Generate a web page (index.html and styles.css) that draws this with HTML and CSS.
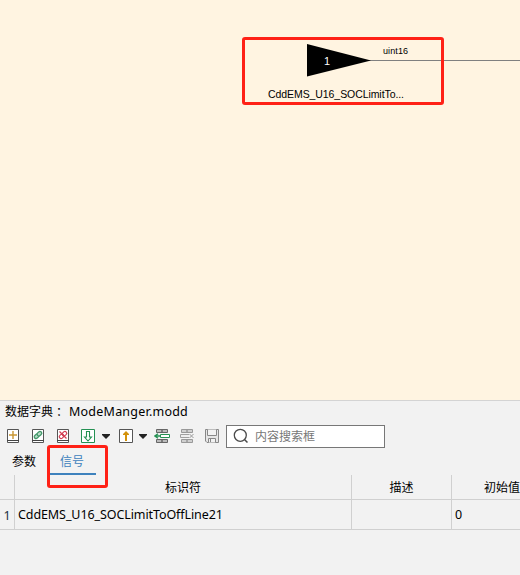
FILE: index.html
```html
<!DOCTYPE html>
<html lang="zh-CN">
<head>
<meta charset="utf-8">
<title>ModeManger.modd</title>
<link rel="stylesheet" href="styles.css">
</head>
<body>
<main class="app">
  <section class="canvas">
    <svg class="diagram" width="520" height="400" viewBox="0 0 520 400">
      <path d="M369 60.500H520" stroke="#808080"/>
      <path d="M307 44L371 60.500L307 76.500Z" fill="#000"/>
      <text class="port" x="324" y="65">1</text>
      <text class="type" x="383" y="54" textLength="25">uint16</text>
      <text class="name" x="268" y="98" textLength="136">CddEMS_U16_SOCLimitTo...</text>
    </svg>
    <div class="mark mark-port"></div>
  </section>
  <section class="panel">
    <header class="title"><span class="title-label">数据字典</span><span class="colon">：</span><span class="file">ModeManger.modd</span></header>
    <div class="toolbar">
      <svg class="book" width="14" height="16" viewBox="0 0 14 16"><path d="M1.500 1.500H12.500V14.500H1.500Z" fill="#fff" stroke="#555"/><path d="M1 12.500H13" stroke="#444"/><path d="M7 3V11M3 7H11" stroke="#c99732" stroke-width="1.400"/></svg>
      <svg class="book" width="14" height="16" viewBox="0 0 14 16"><path d="M1.500 1.500H12.500V14.500H1.500Z" fill="#fff" stroke="#555"/><path d="M1 12.500H13" stroke="#444"/><g transform="rotate(-42 7 7)" fill="#b9dcc8" stroke="#43986a" stroke-width="1.300"><rect x="2.600" y="5.200" width="5" height="3.600" rx="1.800"/><rect x="6.400" y="5.200" width="5" height="3.600" rx="1.800"/></g></svg>
      <svg class="book" width="14" height="16" viewBox="0 0 14 16"><path d="M1.500 1.500H12.500V14.500H1.500Z" fill="#fff" stroke="#555"/><path d="M1 12.500H13" stroke="#444"/><g fill="none" stroke="#d33f54" stroke-width="1.200"><g transform="rotate(-42 7 7)"><rect x="2.600" y="5.200" width="4.800" height="3.600" rx="1.800"/><rect x="6.600" y="5.200" width="4.800" height="3.600" rx="1.800"/></g><path d="M3.500 3.500L10.500 10.500"/></g></svg>
      <svg class="import" width="16" height="16" viewBox="0 0 16 16"><path d="M1.500 1.500H14.500V14.500H1.500Z" fill="#fff" stroke="#249052"/><path d="M6.500 3.500H9.500V9H11.500L8 13L4.500 9H6.500Z" fill="#fff" stroke="#249052" stroke-width="1.100"/></svg>
      <svg class="caret" width="8" height="5" viewBox="0 0 8 5"><path d="M0 0H8V1L4 5L0 1Z" fill="#222"/></svg>
      <svg class="export" width="16" height="16" viewBox="0 0 16 16"><path d="M1.500 1.500H14.500V14.500H1.500Z" fill="#fff" stroke="#555"/><path d="M7 13V7H5V6L8 3L11 6V7H9V13Z" fill="#d3920b"/></svg>
      <svg class="caret" width="8" height="5" viewBox="0 0 8 5"><path d="M0 0H8V1L4 5L0 1Z" fill="#222"/></svg>
      <svg class="rows" width="16" height="16" viewBox="0 0 16 16"><path d="M2.500 1.500H8V4.500H2.500ZM8 1.500H13.500V4.500H8ZM2.500 11.500H8V14.500H2.500ZM8 11.500H13.500V14.500H8Z" fill="#bbb" stroke="#666"/><path d="M6.500 6.500H15.500V9.500H6.500Z" fill="#fff" stroke="#249052"/><path d="M7 8H1M4 5.800L1 8L4 10.200" fill="none" stroke="#249052" stroke-width="1.400"/></svg>
      <svg class="rows-off" width="16" height="16" viewBox="0 0 16 16"><path d="M2.500 1.500H8V4.500H2.500ZM8 1.500H13.500V4.500H8ZM2.500 11.500H8V14.500H2.500ZM8 11.500H13.500V14.500H8Z" fill="#d0d0d0" stroke="#999"/><path d="M10 6.500H1.500V9.500H10" fill="#eee" stroke="#a0a0a0"/><path d="M10.500 6L14.500 10M14.500 6L10.500 10" stroke="#999"/></svg>
      <svg class="save" width="16" height="16" viewBox="0 0 16 16"><path d="M1.500 1.500H14.500V14.500H3L1.500 13Z" fill="#e6e6e6" stroke="#888"/><path d="M3.500 1.500V7.500H12.500V1.500M4.500 14.500V10.500H11.500V14.500M6.500 11V14" fill="#f2f2f2" stroke="#888"/></svg>
      <div class="search">
        <svg width="16" height="16" viewBox="0 0 16 16"><circle cx="7.300" cy="7.300" r="6" fill="none" stroke="#4a4a4a" stroke-width="1.300"/><path d="M11.500 11.500L14.500 14.500" stroke="#4a4a4a" stroke-width="1.500"/></svg>
        <span class="placeholder">内容搜索框</span>
      </div>
    </div>
    <nav class="tabs"><span class="tab">参数</span><span class="tab active">信号</span></nav>
    <div class="mark mark-tab"></div>
    <div class="table">
      <div class="cell head"></div><div class="cell head">标识符</div><div class="cell head">描述</div><div class="cell head last">初始值</div>
      <div class="cell index">1</div><div class="cell value signal">CddEMS_U16_SOCLimitToOffLine21</div><div class="cell"></div><div class="cell value last">0</div>
    </div>
  </section>
</main>
</body>
</html>
```
FILE: styles.css
```css
* { box-sizing: border-box; }
body {
  margin: 0;
  overflow: hidden;
  background: #f2f2f2;
  color: #000;
  font: 12px/16px "Noto Sans", "Noto Sans CJK SC", sans-serif;
}
.app { width: 520px; height: 575px; overflow: hidden; }
.canvas { position: relative; height: 401px; background: #fff4e1; border-bottom: 1px solid #d4d4d4; }
.diagram { display: block; font-family: "Liberation Sans", sans-serif; }
.port { font-size: 11px; fill: #fff; }
.type { font-size: 9px; }
.name { font-size: 10.500px; }
.mark { position: absolute; border: 3px solid #ff2116; border-radius: 3px; }
.mark-port { left: 242px; top: 37px; width: 202px; height: 68px; }
.mark-tab { left: 47px; top: 44px; width: 61px; height: 43px; }
.panel { position: relative; height: 174px; }
.title { display: flex; height: 23px; padding: 3px 0 0 5px; white-space: nowrap; }
.title-label { width: 48px; }
.colon { width: 16px; padding-left: 3px; }
.file { font-size: 12.500px; letter-spacing: 0.230px; }
.toolbar { display: flex; align-items: center; height: 24px; padding-left: 6px; }
.toolbar > * { flex: none; }
.book { margin-right: 11px; }
.book + .import { margin-left: -1px; }
.caret { margin: 0 8px 0 5px; }
.import + .caret { margin-left: 6px; }
.caret + .export { margin-left: 0; }
.rows { margin-left: -1px; }
.rows-off, .save { margin-left: 9px; }
.search {
  display: flex;
  align-items: center;
  gap: 6px;
  width: 159px;
  height: 23px;
  margin-left: 6px;
  padding-left: 6px;
  border: 1px solid #777;
  background: #fff;
  color: #777;
}
.placeholder { padding-top: 2px; }
.tabs { display: flex; height: 27px; padding-left: 2px; }
.tab { width: 45px; height: 27px; padding: 6px 0 0 10px; }
.active { width: 47px; margin-left: 2px; padding-left: 11px; border-bottom: 2px solid #3e82bd; color: #3e82bd; }
.table { display: grid; grid-template-columns: 15px 337px 100px 100px; grid-template-rows: 25px 30px; }
.cell { display: flex; align-items: center; border-right: 1px solid #d0d0d0; border-bottom: 1px solid #d0d0d0; white-space: nowrap; }
.head { justify-content: center; padding-top: 2px; }
.last { border-right: 0; }
.index { justify-content: center; color: #234; font-size: 12.500px; padding-top: 2px; }
.value { padding-left: 3px; font-size: 12.500px; }
.signal { letter-spacing: -0.090px; }
```
